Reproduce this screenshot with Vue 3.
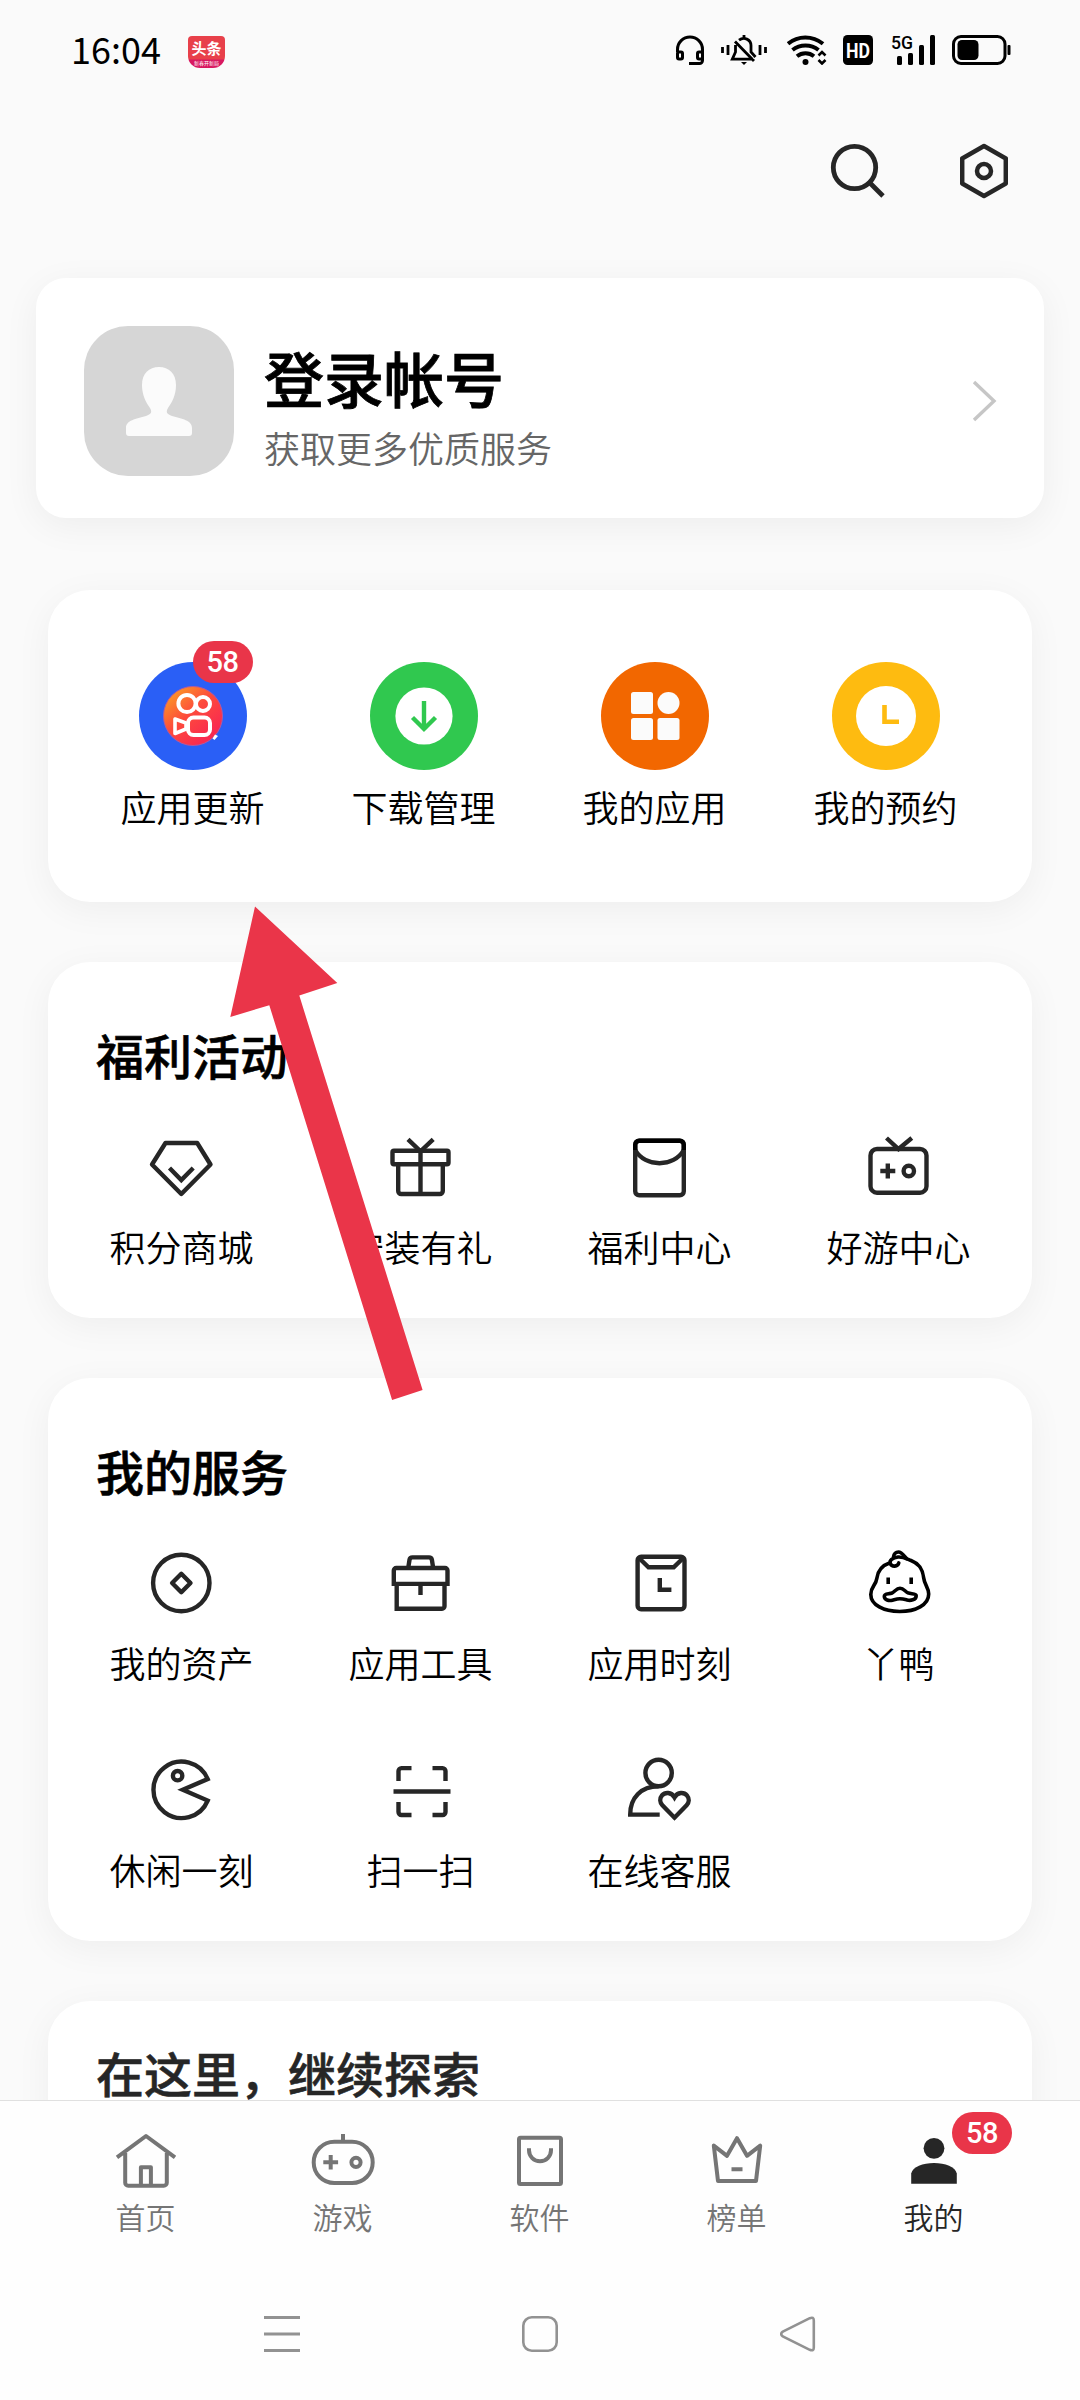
<script setup>
const dark = 'fill="none" stroke="#262626" stroke-width="4.4"'
const svg = (body, attrs = dark) =>
  `<svg width="72" height="72" viewBox="0 0 72 72" style="display:block" ${attrs}>${body}</svg>`

const gray = 'fill="none" stroke="#757575" stroke-width="4"'

const shortcuts = [
  {
    label: '应用更新',
    color: '#2a5ff6',
    badge: '58',
    art: `<defs><linearGradient id="ks" x1="0.1" y1="0.1" x2="0.75" y2="0.85"><stop offset="0" stop-color="#fb9a26"/><stop offset="0.5" stop-color="#fd4a3c"/><stop offset="1" stop-color="#f92a50"/></linearGradient></defs>
      <circle cx="54" cy="54" r="29.5" fill="url(#ks)" stroke="#b05aa0" stroke-width="1"/>
      <g fill="none" stroke="#fff" stroke-width="4"><circle cx="48" cy="41.5" r="8.6"/><circle cx="64" cy="42" r="7"/>
      <rect x="49" y="55.5" width="22" height="17.5" rx="5.5"/><path d="M36 57v14.500l11-4.500v-6z" stroke-linejoin="round" stroke-width="3.600"/></g>
      <path d="M73.500 76.500l2.500-4 3 1.500-3.500 4z" fill="#fff"/>`
  },
  {
    label: '下载管理',
    color: '#30c84f',
    art: `<circle cx="54" cy="54" r="28.6" fill="#fff"/><path d="M54 39v28M42.500 55.500L54 67l11.500-11.500" fill="none" stroke="#30c84f" stroke-width="4.400"/>`
  },
  {
    label: '我的应用',
    color: '#f26700',
    art: `<g fill="#fbfbfb"><rect x="30" y="30" width="22" height="22" rx="2.500"/><circle cx="67.500" cy="41" r="11"/><rect x="30" y="56" width="22" height="22" rx="2.500"/><rect x="56.500" y="56" width="22" height="22" rx="2.500"/></g>`
  },
  {
    label: '我的预约',
    color: '#febb10',
    art: `<circle cx="54" cy="54" r="30" fill="#fff"/><path d="M52.500 43v16.800H67" fill="none" stroke="#febb10" stroke-width="4.600"/>`
  }
]

const welfare = [
  { label: '积分商城', icon: svg('<path d="M20.500 12h31.700L65.500 33.500 36.300 63 7 33.500z" stroke-linejoin="round"/><path d="M24.500 37L36.300 49 48.200 37"/>') },
  { label: '安装有礼', icon: svg('<rect x="8.500" y="19.700" width="56" height="13.600" rx="1.500"/><path d="M14.200 33.300V60a3 3 0 0 0 3 3h38.600a3 3 0 0 0 3-3V33.300M36.500 19.700V63M24 8.300l12.500 12L49.200 8.300"/>') },
  { label: '福利中心', icon: svg('<rect x="12.200" y="9.700" width="48.600" height="54.600" rx="4"/><path d="M12.200 19C22 36.600 51 36.600 60.800 19"/><path d="M12.200 19v-5.300a4 4 0 0 1 4-4h40.600a4 4 0 0 1 4 4V19" stroke="#000"/>') },
  { label: '好游中心', icon: svg('<rect x="8.500" y="18" width="56" height="43.700" rx="6.500"/><path d="M24.500 7l12 11L49.800 7M18.300 40h15M25.800 32.500v15"/><circle cx="46.800" cy="40" r="5.200"/>') }
]

const services = [
  { label: '我的资产', icon: svg('<circle cx="36.300" cy="36" r="28.200"/><path d="M36.300 26.800l9.200 9.200-9.200 9.200-9.200-9.200z" stroke-linejoin="round"/>') },
  { label: '应用工具', icon: svg('<path d="M9.800 39.100V23.500a2.500 2.500 0 0 1 2.500-2.500H61a2.500 2.500 0 0 1 2.500 2.500v15.600M9.800 36.900h53.700M12.700 36.900v24.800H58a2.500 2.500 0 0 0 2.500-2.500V36.900M36.500 37v11M24.200 21l1.300-8.200a3 3 0 0 1 3-2.400h16.400a3 3 0 0 1 3 2.400L49.200 21"/>') },
  { label: '应用时刻', icon: svg('<rect x="14.600" y="9.700" width="46.900" height="52.500" rx="3.500"/><path d="M16.500 11.500l9 8.800h25.200l9-8.800M36.800 31v11.700h11.600"/>') },
  {
    label: '丫鸭',
    icon: svg(
      '<path d="M28 15.800C20 18.500 15.800 23 14.800 31.500 13.800 39 8.800 39 8.800 47.500c0 10.500 13 17 28.900 17s29-6.500 29-17.500c0-6.500-4.200-9-5-16C60.500 20 55.500 16 49 13.500c-4-1.500-8-4-13-3.500-5.500.5-9 3.500-7.700 6.500 1.600 3.800 7.500 3.500 8.500-.6"/><path d="M31.500 10c.5-3.300 2.500-5 5-5 3 0 4.500 2.500 8 6.500"/><path d="M38 41.300c3.800 0 4.800 3 8 4.600 2.800 1.400 8.200 0 8.200 2.800 0 4.500-6 5.100-9.200 4.300-3-.8-4.300-1.200-7.200-1.200s-4.300.6-7.300 1.400c-3.500.9-8.200 0-8.200-3.900 0-3 4.700-2 7.700-3.300 3.200-1.500 4.200-4.700 8-4.700z"/><path d="M26.200 30.500v6.400M49.200 30.500v6.400" stroke-linecap="butt"/>',
      'fill="none" stroke="#000" stroke-width="3.600" stroke-linecap="round"'
    )
  },
  { label: '休闲一刻', icon: svg('<path d="M62.700 25A28.200 28.200 0 1 0 62.700 46.600L37.800 35.800z"/><circle cx="32.600" cy="21.700" r="4.700"/>') },
  { label: '扫一扫', icon: svg('<path d="M14.500 27V17.100a3 3 0 0 1 3-3h10M48.500 14.100h10a3 3 0 0 1 3 3V27M61.500 48v10a3 3 0 0 1-3 3h-10M27.500 61h-10a3 3 0 0 1-3-3V48M9.500 37.500h57"/>') },
  { label: '在线客服', icon: svg('<circle cx="35.600" cy="19" r="13.200"/><path d="M35.600 32.200C18 32.200 7 44 7.200 60.600h29.500"/><path d="M51.500 43.300c-3.200-5.600-9.500-5.300-12.400-2-2.700 3.200-2.300 7.200.3 10L51.500 63.700 63.600 51.300c2.600-2.800 3-6.800.3-10-2.900-3.300-9.200-3.600-12.400 2z"/>') }
]

const tabs = [
  { label: '首页', icon: svg('<path d="M7 33.300L36 12l29 21.300M15.200 29v29.700a3 3 0 0 0 3 3h35.600a3 3 0 0 0 3-3V29M30.900 61.700V43.200h10v18.500" stroke-linejoin="round"/>', gray) },
  { label: '游戏', icon: svg('<rect x="6.700" y="17.700" width="59" height="41.300" rx="20.600"/><path d="M36 10v8M16.300 38.300h14.800M23.700 31v14.600"/><circle cx="49" cy="38.300" r="4.600"/>', gray) },
  { label: '软件', icon: svg('<rect x="15" y="13.700" width="42" height="46.300" rx="1.500"/><path d="M25 24.300v2a11 11 0 0 0 22 0v-2"/>', gray) },
  { label: '榜单', icon: svg('<path d="M12.800 21.600L26 31.800l10-17.600 10 17.600 13.200-10.200L55 57H17zM30.500 45.300h11" stroke-linejoin="round"/>', gray) },
  { label: '我的', active: true, badge: '58', icon: svg('<circle cx="36" cy="24.300" r="10.400"/><path d="M13.200 59.700V49.500C14.500 43 25 39 36 39s21.500 4 22.800 10.500v10.200z"/>', 'fill="#262626"') }
]
</script>

<template>
  <div class="screen">
    <header class="status">
      <span class="clock">16:04</span>
      <span class="news"><b>头条</b><i>新春开新局</i></span>
      <div class="signals">
        <svg width="28" height="30" viewBox="0 0 28 30" fill="none" stroke="#000" stroke-width="3">
          <path d="M1.500 17v-2.500a12.500 12.500 0 0 1 25 0v11a3 3 0 0 1-3 3H13" />
          <rect x="1.500" y="17" width="5" height="7" rx="1.500" />
          <rect x="21.500" y="17" width="5" height="7" rx="1.500" />
        </svg>
        <svg class="bell" width="46" height="30" viewBox="0 0 46 30" fill="none" stroke="#000" stroke-width="2.800">
          <path d="M1.500 12v6M7 10v10M39 10v10M44.500 12v6M18 5.200c5-4 12-.7 12 5.300v6.500l4.500 5M14.500 10v7L11.300 24.200h21M14 6.500L33 26M23 0v3" />
          <path d="M20 27h6l-3 3z" fill="#000" stroke="none" />
        </svg>
        <svg class="wifi" width="40" height="30" viewBox="0 0 40 30" fill="none" stroke="#000" stroke-width="4">
          <path d="M1 8.800C11 .3 25.500.3 36 8.800M5.500 15c7.500-6 18.500-6 26 0M10 21.300c5-4 12-4 17 0" />
          <circle cx="18.500" cy="27" r="3" fill="#000" stroke="none" />
          <path d="M31.500 20.500l3.500-3.500 3.500 3.500M31.500 25l3.500 3.500 3.500-3.500" stroke-width="2.600" />
        </svg>
        <svg class="hd" width="30" height="30" viewBox="0 0 30 30">
          <rect width="30" height="30" rx="4.500" />
          <text x="15" y="22.800" text-anchor="middle" textLength="24" lengthAdjust="spacingAndGlyphs" class="hd-text">HD</text>
        </svg>
        <svg class="cell" width="44" height="30" viewBox="0 0 44 30">
          <text x="0" y="14.300" textLength="22" lengthAdjust="spacingAndGlyphs" class="net">5G</text>
          <rect x="6" y="21" width="5" height="9" rx="1.500" />
          <rect x="17" y="18" width="5" height="12" rx="1.500" />
          <rect x="28" y="10" width="5" height="20" rx="1.500" />
          <rect x="39" y="0" width="5" height="30" rx="1.500" />
        </svg>
        <svg class="battery" width="59" height="30" viewBox="0 0 59 30">
          <rect x="1.500" y="1.500" width="51.500" height="27" rx="7.500" fill="none" stroke="#000" stroke-width="3" />
          <rect x="5.500" y="5" width="21" height="20" rx="4.500" />
          <rect x="55.500" y="10" width="3" height="10" rx="1" />
        </svg>
      </div>
    </header>

    <div class="tools">
      <svg width="56" height="56" viewBox="0 0 56 56" fill="none" stroke="#262626" stroke-width="4.800">
        <circle cx="24.500" cy="24.500" r="21.200" />
        <path d="M39.500 39.500L53 53" />
      </svg>
      <svg width="48" height="56" viewBox="0 0 48 56" fill="none" stroke="#262626" stroke-width="4.500" stroke-linejoin="round">
        <path d="M24 3l21.800 12.500v25L24 53 2.200 40.500v-25z" />
        <circle cx="24" cy="28" r="7" />
      </svg>
    </div>

    <section class="login">
      <div class="avatar">
        <svg width="66" height="69" viewBox="0 0 66 69" fill="#fbfbfb">
          <path d="M33 0C43 0 50 6.500 50 18c0 10-4 17.500-8 23-2.500 4.500-1 6 4 8C56 52 66 53 66 61v5c0 2-1 3-3 3H3c-2 0-3-1-3-3v-5c0-8 10-9 20-12 5-2 6.500-3.500 4-8-4-5.500-8-13-8-23C16 6.500 23 0 33 0z" />
        </svg>
      </div>
      <div class="who">
        <h1>登录帐号</h1>
        <p>获取更多优质服务</p>
      </div>
      <svg width="26" height="42" viewBox="0 0 26 42" fill="none" stroke="#c6c6c6" stroke-width="3.400">
        <path d="M2 2l20 19L2 40" />
      </svg>
    </section>

    <section class="card quick">
      <div v-for="s in shortcuts" :key="s.label" class="shortcut">
        <div class="disc">
          <svg width="108" height="108" viewBox="0 0 108 108">
            <circle cx="54" cy="54" r="54" :fill="s.color" />
            <g v-html="s.art"></g>
          </svg>
          <span v-if="s.badge" class="badge">{{ s.badge }}</span>
        </div>
        <span class="label">{{ s.label }}</span>
      </div>
    </section>

    <section class="card">
      <h2>福利活动</h2>
      <div class="grid">
        <div v-for="w in welfare" :key="w.label" class="cell-item">
          <div class="glyph" v-html="w.icon"></div>
          <span class="label">{{ w.label }}</span>
        </div>
      </div>
    </section>

    <section class="card">
      <h2>我的服务</h2>
      <div class="grid">
        <div v-for="s in services" :key="s.label" class="cell-item">
          <div class="glyph" v-html="s.icon"></div>
          <span class="label">{{ s.label }}</span>
        </div>
      </div>
    </section>

    <section class="card explore">
      <h2>在这里，继续探索</h2>
    </section>

    <footer class="bottom">
      <nav class="tabs">
        <div v-for="t in tabs" :key="t.label" class="tab" :class="{ active: t.active }">
          <div v-html="t.icon"></div>
          <span>{{ t.label }}</span>
          <span v-if="t.badge" class="badge">{{ t.badge }}</span>
        </div>
      </nav>
      <div class="sysnav">
        <svg width="36" height="36" viewBox="0 0 36 36" stroke="#929292" stroke-width="3">
          <path d="M0 1.500h36M0 18h36M0 34.500h36" />
        </svg>
        <svg width="36" height="36" viewBox="0 0 36 36" fill="none" stroke="#929292" stroke-width="2.600">
          <rect x="1.300" y="1.300" width="33.400" height="33.400" rx="8.500" />
        </svg>
        <svg width="36" height="36" viewBox="0 0 36 36" fill="none" stroke="#929292" stroke-width="2.600">
          <path d="M2.800 15.600L29.800 2.200Q33.800.5 33.800 4.500v27q0 4-4 2.300L2.800 20.400Q-.5 18 2.800 15.600z" />
        </svg>
      </div>
    </footer>

    <svg class="pointer" width="193" height="494" viewBox="0 0 193 494">
      <path d="M25 .5L107.300 77l-38 12.600L192.600 484l-30.500 10L39.300 99.200.3 111z" fill="#ea3549" />
    </svg>
  </div>
</template>

<style>
body {
  margin: 0;
  background: #fafafa;
}
</style>

<style scoped>
.screen {
  position: relative;
  display: flex;
  flex-direction: column;
  width: 1080px;
  height: 2400px;
  overflow: hidden;
  background: #fafafa;
  color: #000;
  font-family: "Noto Sans CJK SC", sans-serif;
}
svg {
  display: block;
  flex: none;
}
.status {
  display: flex;
  align-items: center;
  height: 100px;
  padding: 0 69px 0 71px;
}
.clock {
  width: 117px;
  margin-top: -4px;
  font-size: 36px;
  line-height: 44px;
  white-space: nowrap;
}
.news {
  display: flex;
  flex-direction: column;
  align-items: center;
  width: 37px;
  height: 32px;
  margin-top: 4px;
  border-radius: 4px 4px 12px 12px;
  background: linear-gradient(#e8404a 0 23px, #d81860 24px);
  color: #fff;
}
.news b {
  height: 23px;
  font-size: 15px;
  line-height: 23px;
  font-weight: 700;
}
.news i {
  font-size: 5px;
  line-height: 8px;
  font-style: normal;
}
.signals {
  display: flex;
  margin-left: auto;
}
.bell { margin-left: 17px; }
.wifi { margin-left: 20px; }
.hd { margin-left: 16px; }
.cell {
  margin-left: 18px;
  overflow: visible;
}
.battery { margin-left: 17px; }
.hd-text {
  fill: #fff;
  font: 700 21px Roboto, sans-serif;
}
.net {
  font: 500 19px Roboto, sans-serif;
}
.tools {
  display: flex;
  justify-content: flex-end;
  gap: 74px;
  height: 135px;
  padding: 43px 72px 0 0;
}
.login {
  display: flex;
  align-items: center;
  flex: none;
  box-sizing: border-box;
  height: 240px;
  margin: 0 36px 72px;
  padding: 6px 46px 0 48px;
  border-radius: 30px;
  background: #fff;
  box-shadow: 0 8px 36px rgba(0, 0, 0, 0.055);
}
.avatar {
  display: flex;
  align-items: center;
  justify-content: center;
  width: 150px;
  height: 150px;
  border-radius: 44px;
  background: #d6d6d6;
}
.who {
  flex: 1;
  margin-left: 30px;
  padding-top: 5px;
}
h1 {
  margin: 0;
  font-size: 60px;
  line-height: 76px;
  font-weight: 500;
  -webkit-text-stroke: 0.8px currentColor;
}
p {
  margin: 10px 0 0;
  font-size: 36px;
  line-height: 44px;
  font-weight: 350;
  color: #666;
}
.card {
  flex: none;
  box-sizing: border-box;
  margin: 0 48px 60px;
  padding: 62px 14px 49px;
  border-radius: 42px;
  background: #fff;
  box-shadow: 0 8px 36px rgba(0, 0, 0, 0.05);
}
.quick {
  display: flex;
  height: 312px;
  padding: 72px 31px 0 29px;
}
.shortcut {
  display: flex;
  flex: 1;
  flex-direction: column;
  align-items: center;
  gap: 14px;
}
.disc {
  position: relative;
}
.badge {
  position: absolute;
  top: -21px;
  left: 54px;
  width: 60px;
  height: 42px;
  border-radius: 21px;
  background: #e93549;
  color: #fff;
  font: 500 29px/42px Roboto, sans-serif;
  letter-spacing: -0.5px;
  text-align: center;
}
.label {
  font-size: 36px;
  line-height: 44px;
  font-weight: 350;
  white-space: nowrap;
}
h2 {
  margin: 0 34px 47px;
  font-size: 48px;
  line-height: 60px;
  font-weight: 500;
  -webkit-text-stroke: 0.6px currentColor;
}
.grid {
  display: grid;
  grid-template-columns: repeat(4, 1fr);
  row-gap: 70px;
}
.cell-item {
  display: flex;
  flex-direction: column;
  align-items: center;
  gap: 21px;
}
.glyph {
  margin-right: 1px;
}
.card:not(.quick):not(.explore) {
  padding-bottom: 50px;
}
.explore {
  height: 240px;
  margin-bottom: -141px;
  padding-top: 41px;
  color: #262626;
}
.bottom {
  position: relative;
  flex: none;
  box-sizing: border-box;
  height: 300px;
  border-top: 1px solid #e0e0e0;
  background: #fefefe;
}
.tabs {
  display: flex;
  height: 215px;
  padding: 23px 48px 0 47px;
  box-sizing: border-box;
}
.tab {
  position: relative;
  display: flex;
  flex: 1;
  flex-direction: column;
  align-items: center;
  color: #757575;
  font-size: 30px;
  font-weight: 350;
  line-height: 40px;
}
.tab.active {
  color: #262626;
}
.tab .badge {
  top: -12px;
  left: 117px;
}
.sysnav {
  display: flex;
  justify-content: center;
  gap: 222px;
}
.pointer {
  position: absolute;
  left: 230px;
  top: 906px;
}
</style>
